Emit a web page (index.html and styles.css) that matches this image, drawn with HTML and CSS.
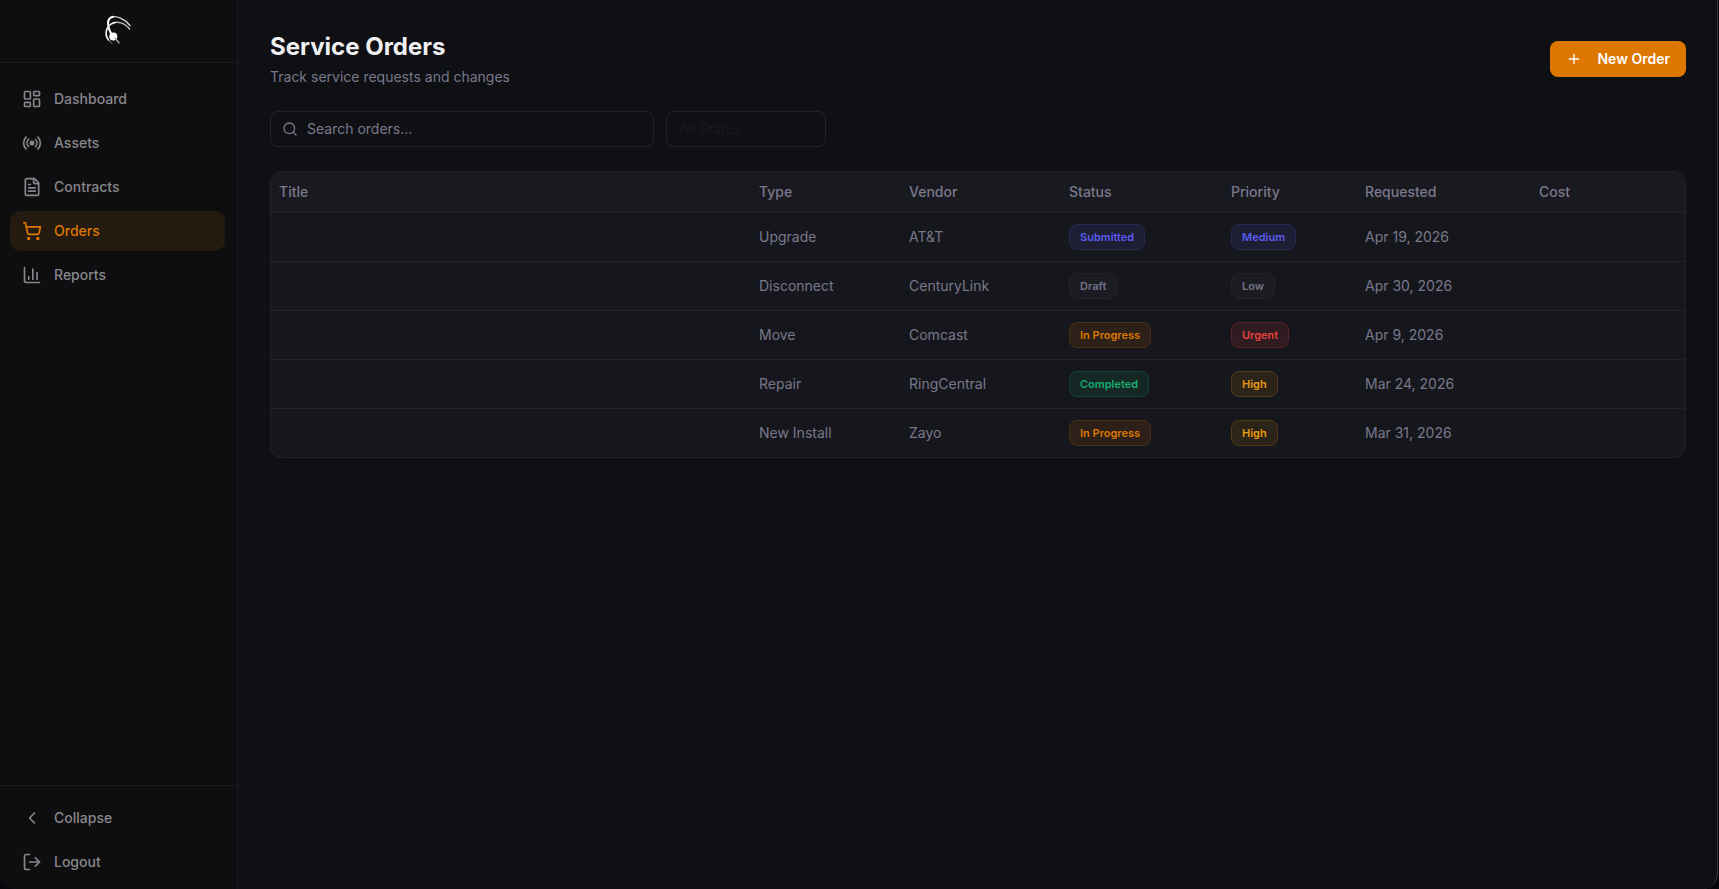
FILE: index.html
```html
<!DOCTYPE html>
<html lang="en">
<head>
  <meta charset="UTF-8">
  <meta name="viewport" content="width=device-width, initial-scale=1.0">
  <title>Service Orders</title>
  <link rel="stylesheet" href="styles.css">
</head>
<body>
<div class="window">

  <!-- Sidebar -->
  <aside class="sidebar">
    <div class="brand">
      <svg class="logo" viewBox="0 0 36 36" fill="none" stroke-linecap="round" aria-hidden="true">
        <path d="M31 15.500C26 9 17 5 12 7.300" stroke="#ddd" stroke-width="1.300"/>
        <path d="M14 6.700C7 8 8 17 13.500 26" stroke="#fff" stroke-width="2"/>
        <path d="M30.500 19C26 12.500 18 11 13 13.500" stroke="#bbb" stroke-width="1.500"/>
        <path d="M16 12.500C6 15 5.500 25 9.500 30" stroke="#eee" stroke-width="1.700"/>
        <path d="M9.500 30L13 33.500" stroke="#999" stroke-width="1"/>
        <circle cx="14.300" cy="26.600" r="4" fill="#fff"/>
        <path d="M16 28L20 33" stroke="#aaa" stroke-width="1.300"/>
      </svg>
    </div>

    <nav class="nav">
      <a class="nav-item" href="#">
        <svg class="icon" viewBox="0 0 24 24"><rect x="3" y="3" width="7" height="9" rx="1"/><rect x="14" y="3" width="7" height="5" rx="1"/><rect x="14" y="12" width="7" height="9" rx="1"/><rect x="3" y="16" width="7" height="5" rx="1"/></svg>
        Dashboard
      </a>
      <a class="nav-item" href="#">
        <svg class="icon" viewBox="0 0 24 24"><path d="M4.900 19.100C1 15.200 1 8.800 4.900 4.900"/><path d="M7.800 16.200c-2.300-2.300-2.300-6.100 0-8.500"/><circle cx="12" cy="12" r="2" fill="currentColor"/><path d="M16.200 7.800c2.300 2.300 2.300 6.100 0 8.500"/><path d="M19.100 4.900C23 8.800 23 15.100 19.100 19"/></svg>
        Assets
      </a>
      <a class="nav-item" href="#">
        <svg class="icon" viewBox="0 0 24 24"><path d="M15 2H6a2 2 0 0 0-2 2v16a2 2 0 0 0 2 2h12a2 2 0 0 0 2-2V7Z"/><path d="M14 2v4a2 2 0 0 0 2 2h4"/><path d="M10 9H8"/><path d="M16 13H8"/><path d="M16 17H8"/></svg>
        Contracts
      </a>
      <a class="nav-item active" href="#">
        <svg class="icon" viewBox="0 0 24 24"><circle cx="8" cy="21" r="1"/><circle cx="19" cy="21" r="1"/><path d="M2.050 2.050h2l2.660 12.420a2 2 0 0 0 2 1.580h9.780a2 2 0 0 0 1.950-1.570l1.650-7.430H5.120"/></svg>
        Orders
      </a>
      <a class="nav-item" href="#">
        <svg class="icon" viewBox="0 0 24 24"><path d="M3 3v16a2 2 0 0 0 2 2h16"/><path d="M18 17V9"/><path d="M13 17V5"/><path d="M8 17v-3"/></svg>
        Reports
      </a>
    </nav>

    <div class="sidebar-footer">
      <button class="nav-item" type="button">
        <svg class="icon" viewBox="0 0 24 24"><path d="m15 18-6-6 6-6"/></svg>
        Collapse
      </button>
      <button class="nav-item" type="button">
        <svg class="icon" viewBox="0 0 24 24"><path d="M9 21H5a2 2 0 0 1-2-2V5a2 2 0 0 1 2-2h4"/><path d="m16 17 5-5-5-5"/><path d="M21 12H9"/></svg>
        Logout
      </button>
    </div>
  </aside>

  <!-- Content -->
  <main class="main">
    <header class="page-header">
      <div>
        <h1 class="page-title">Service Orders</h1>
        <p class="page-subtitle">Track service requests and changes</p>
      </div>
      <button class="new-order" type="button">
        <svg class="icon-sm" viewBox="0 0 24 24"><path d="M5 12h14"/><path d="M12 5v14"/></svg>
        New Order
      </button>
    </header>

    <div class="filters">
      <label class="search">
        <svg class="icon-sm" viewBox="0 0 24 24"><circle cx="11" cy="11" r="8"/><path d="m21 21-4.300-4.300"/></svg>
        <input type="text" placeholder="Search orders..." aria-label="Search orders">
      </label>
      <div class="status-filter">
        <select aria-label="Status">
          <option>All Status</option>
          <option>Draft</option>
          <option>Submitted</option>
          <option>In Progress</option>
          <option>Completed</option>
        </select>
        <svg class="icon-sm" viewBox="0 0 24 24"><path d="m6 9 6 6 6-6"/></svg>
      </div>
    </div>

    <div class="table-card">
      <table class="orders">
        <colgroup>
          <col>
          <col class="col-type">
          <col class="col-vendor">
          <col class="col-status">
          <col class="col-priority">
          <col class="col-requested">
          <col class="col-cost">
        </colgroup>
        <thead>
          <tr>
            <th>Title</th>
            <th>Type</th>
            <th>Vendor</th>
            <th>Status</th>
            <th>Priority</th>
            <th>Requested</th>
            <th>Cost</th>
          </tr>
        </thead>
        <tbody>
          <tr>
            <td></td>
            <td>Upgrade</td>
            <td>AT&amp;T</td>
            <td><span class="badge blue">Submitted</span></td>
            <td><span class="badge blue">Medium</span></td>
            <td>Apr 19, 2026</td>
            <td></td>
          </tr>
          <tr>
            <td></td>
            <td>Disconnect</td>
            <td>CenturyLink</td>
            <td><span class="badge gray">Draft</span></td>
            <td><span class="badge gray">Low</span></td>
            <td>Apr 30, 2026</td>
            <td></td>
          </tr>
          <tr>
            <td></td>
            <td>Move</td>
            <td>Comcast</td>
            <td><span class="badge orange">In Progress</span></td>
            <td><span class="badge red">Urgent</span></td>
            <td>Apr 9, 2026</td>
            <td></td>
          </tr>
          <tr>
            <td></td>
            <td>Repair</td>
            <td>RingCentral</td>
            <td><span class="badge green">Completed</span></td>
            <td><span class="badge yellow">High</span></td>
            <td>Mar 24, 2026</td>
            <td></td>
          </tr>
          <tr>
            <td></td>
            <td>New Install</td>
            <td>Zayo</td>
            <td><span class="badge orange">In Progress</span></td>
            <td><span class="badge yellow">High</span></td>
            <td>Mar 31, 2026</td>
            <td></td>
          </tr>
        </tbody>
      </table>
    </div>
  </main>

</div>
</body>
</html>
```
FILE: styles.css
```css
* {
  box-sizing: border-box;
}

body {
  margin: 0;
  background: #07060b;
  color: #79788c;
  font-family: Inter, "Liberation Sans", sans-serif;
  font-size: 14px;
  line-height: 20px;
}

button,
input,
select {
  font: inherit;
}

.window {
  display: flex;
  min-height: 100vh;
  margin-right: 1px;
  background: #0f1014;
  border-right: 1px solid #3a3a3c;
  border-radius: 0 0 16px 16px;
  overflow: hidden;
}

.icon,
.icon-sm {
  flex-shrink: 0;
  fill: none;
  stroke: currentColor;
  stroke-width: 2;
  stroke-linecap: round;
  stroke-linejoin: round;
}

.icon {
  width: 20px;
  height: 20px;
}

.icon-sm {
  width: 16px;
  height: 16px;
}

/* Sidebar */
.sidebar {
  display: flex;
  flex-direction: column;
  flex-shrink: 0;
  width: 238px;
  background: #0e0e10;
  border-right: 1px solid #1a1b1f;
}

.brand {
  display: flex;
  align-items: center;
  justify-content: center;
  height: 63px;
  padding: 0 4px 6px 0;
  border-bottom: 1px solid #1a1b1f;
}

.logo {
  width: 36px;
  height: 36px;
}

.nav,
.sidebar-footer {
  display: flex;
  flex-direction: column;
  gap: 4px;
}

.nav {
  flex: 1;
  padding: 16px 12px 16px 10px;
}

.sidebar-footer {
  padding: 12px 12px 7px 10px;
  border-top: 1px solid #1a1b1f;
}

.nav-item {
  display: flex;
  align-items: center;
  gap: 12px;
  padding: 10px 12px;
  border: none;
  border-radius: 10px;
  background: none;
  color: #88878b;
  font-weight: 500;
  text-decoration: none;
  cursor: pointer;
}

.nav-item.active {
  background: #251a10;
  color: #de7700;
}

/* Page header */
.main {
  flex: 1;
  min-width: 0;
  padding: 31px 31px 31px 32px;
}

.page-header {
  display: flex;
  align-items: center;
  justify-content: space-between;
  margin-bottom: 24px;
}

.page-title {
  margin: 0 0 4px;
  color: #f0f0f2;
  font-size: 24px;
  font-weight: 700;
  line-height: 32px;
}

.page-subtitle {
  margin: 0;
}

.new-order {
  display: flex;
  align-items: center;
  gap: 15px;
  height: 36px;
  padding: 0 16px;
  border: none;
  border-radius: 8px;
  background: #de7700;
  color: #fff;
  font-weight: 600;
  cursor: pointer;
}

/* Filters */
.filters {
  display: flex;
  gap: 12px;
  margin-bottom: 24px;
}

.search {
  display: flex;
  align-items: center;
  gap: 9px;
  width: 384px;
  height: 36px;
  padding: 0 11px;
  border: 1px solid #222328;
  border-radius: 8px;
}

.search input {
  flex: 1;
  min-width: 0;
  padding: 0;
  border: none;
  outline: none;
  background: none;
  color: #f0f0f2;
}

.search input::placeholder {
  color: #79788c;
}

.status-filter {
  display: grid;
  align-items: center;
  width: 160px;
  height: 36px;
  border: 1px solid #222328;
  border-radius: 8px;
  color: #191a1e;
}

.status-filter select,
.status-filter svg {
  grid-area: 1 / 1;
}

.status-filter select {
  width: 100%;
  height: 100%;
  padding: 0 12px;
  border: none;
  outline: none;
  appearance: none;
  background: none;
  color: inherit;
}

.status-filter svg {
  justify-self: end;
  margin-right: 12px;
  opacity: 0.5;
  pointer-events: none;
}

/* Orders table */
.table-card {
  border: 1px solid #222328;
  border-radius: 12px;
  background: #16171c;
  overflow: hidden;
}

.orders {
  width: 100%;
  table-layout: fixed;
  border-collapse: separate;
  border-spacing: 0;
}

.col-type {
  width: 150px;
}

.col-vendor {
  width: 160px;
}

.col-status {
  width: 162px;
}

.col-priority {
  width: 134px;
}

.col-requested {
  width: 174px;
}

.col-cost {
  width: 154px;
}

.orders th,
.orders td {
  padding: 0 8px;
  border-bottom: 1px solid #222328;
  text-align: left;
}

.orders th {
  height: 41px;
  background: #191a1f;
  font-weight: 500;
}

.orders td {
  height: 49px;
}

.orders tbody tr:last-child td {
  height: 48px;
  border-bottom: none;
}

.badge {
  display: inline-block;
  padding: 4px 10px;
  border: 1px solid;
  border-radius: 8px;
  font-size: 11px;
  font-weight: 600;
  line-height: 16px;
  vertical-align: middle;
}

.blue {
  background: #1d1e33;
  border-color: #272953;
  color: #5b5cf0;
}

.gray {
  background: #1c1d23;
  border-color: #222328;
  color: #737286;
}

.orange {
  background: #2c2019;
  border-color: #4b2f15;
  color: #de7700;
}

.red {
  background: #2f1b20;
  border-color: #552226;
  color: #e5443f;
}

.green {
  background: #162825;
  border-color: #16412f;
  color: #15ad70;
}

.yellow {
  background: #2d2419;
  border-color: #503a14;
  color: #e89b0c;
}
```
